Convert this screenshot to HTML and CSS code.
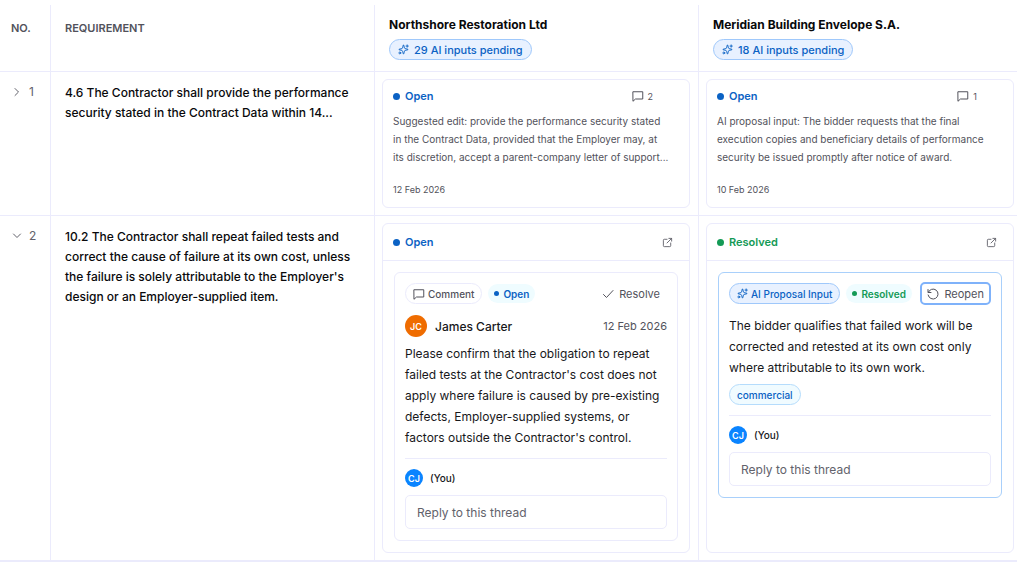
FILE: index.html
```
<!DOCTYPE html>
<html lang="en">
<head>
    <meta charset="UTF-8">
    <meta name="viewport" content="width=device-width, initial-scale=1.0">
    <title>Bid Comparison</title>
    <link rel="stylesheet" href="styles.css">
</head>
<body>
    <!-- shared icons -->
    <svg class="icon-defs" aria-hidden="true">
        <symbol id="icon-ai" viewBox="0 0 24 24">
            <path d="M9.937 15.5A2 2 0 0 0 8.5 14.063l-6.135-1.582a.5.5 0 0 1 0-.962L8.5 9.936A2 2 0 0 0 9.937 8.5l1.582-6.135a.5.5 0 0 1 .963 0L14.063 8.5A2 2 0 0 0 15.5 9.937l6.135 1.581a.5.5 0 0 1 0 .964L15.5 14.063a2 2 0 0 0-1.437 1.437l-1.582 6.135a.5.5 0 0 1-.963 0z"/>
            <path d="M20 2v5M22.500 4.500h-5"/>
            <circle cx="4" cy="19.500" r="2"/>
        </symbol>
        <symbol id="icon-comment" viewBox="0 0 24 24">
            <path d="M2.500 3.500h19v14.500H7l-4.500 4z"/>
        </symbol>
        <symbol id="icon-open" viewBox="0 0 24 24">
            <path d="M15 3h6v6M21 3L11 13M11 5H5a2 2 0 0 0-2 2v12a2 2 0 0 0 2 2h12a2 2 0 0 0 2-2v-6"/>
        </symbol>
        <symbol id="icon-check" viewBox="0 0 24 24">
            <path d="M3 13l6 6L22 5"/>
        </symbol>
        <symbol id="icon-reopen" viewBox="0 0 24 24">
            <path d="M2 3v6h6M2.500 9a10 10 0 1 1-.3 5"/>
        </symbol>
        <symbol id="icon-right" viewBox="0 0 24 24">
            <path d="M8 5l7 7-7 7"/>
        </symbol>
        <symbol id="icon-down" viewBox="0 0 24 24">
            <path d="M5 8l7 7 7-7"/>
        </symbol>
    </svg>

    <div class="table-wrap">
        <table class="compare">
            <thead>
                <tr>
                    <th class="col-no">No.</th>
                    <th class="col-req">Requirement</th>
                    <th class="col-bidder">
                        <div class="bidder">Northshore Restoration Ltd</div>
                        <span class="pill pill-ai pill-count"><svg class="icon"><use href="#icon-ai"/></svg>29 AI inputs pending</span>
                    </th>
                    <th class="col-bidder">
                        <div class="bidder">Meridian Building Envelope S.A.</div>
                        <span class="pill pill-ai pill-count"><svg class="icon"><use href="#icon-ai"/></svg>18 AI inputs pending</span>
                    </th>
                </tr>
            </thead>
            <tbody>
                <tr>
                    <td class="col-no">
                        <button type="button" class="toggle" aria-expanded="false"><svg class="icon"><use href="#icon-right"/></svg>1</button>
                    </td>
                    <td class="col-req">4.6 The Contractor shall provide the performance<br>security stated in the Contract Data within 14...</td>
                    <td class="col-bidder">
                        <div class="card summary">
                            <div class="summary-head">
                                <span class="status open">Open</span>
                                <span class="count"><svg class="icon"><use href="#icon-comment"/></svg>2</span>
                            </div>
                            <p>Suggested edit: provide the performance security stated<br>in the Contract Data, provided that the Employer may, at<br>its discretion, accept a parent-company letter of support...</p>
                            <time>12 Feb 2026</time>
                        </div>
                    </td>
                    <td class="col-bidder">
                        <div class="card summary">
                            <div class="summary-head">
                                <span class="status open">Open</span>
                                <span class="count"><svg class="icon"><use href="#icon-comment"/></svg>1</span>
                            </div>
                            <p>AI proposal input: The bidder requests that the final<br>execution copies and beneficiary details of performance<br>security be issued promptly after notice of award.</p>
                            <time>10 Feb 2026</time>
                        </div>
                    </td>
                </tr>
                <tr>
                    <td class="col-no">
                        <button type="button" class="toggle" aria-expanded="true"><svg class="icon"><use href="#icon-down"/></svg>2</button>
                    </td>
                    <td class="col-req">10.2 The Contractor shall repeat failed tests and<br>correct the cause of failure at its own cost, unless<br>the failure is solely attributable to the Employer's<br>design or an Employer-supplied item.</td>
                    <td class="col-bidder">
                        <div class="card detail">
                            <div class="detail-head">
                                <span class="status open">Open</span>
                                <a href="#" class="open-link" aria-label="Open thread"><svg class="icon"><use href="#icon-open"/></svg></a>
                            </div>
                            <div class="thread">
                                <div class="thread-head">
                                    <span class="pill"><svg class="icon"><use href="#icon-comment"/></svg>Comment</span>
                                    <span class="tag open">Open</span>
                                    <button type="button" class="action"><svg class="icon"><use href="#icon-check"/></svg>Resolve</button>
                                </div>
                                <div class="author">
                                    <span class="avatar avatar-jc">JC</span>
                                    <span class="name">James Carter</span>
                                    <time>12 Feb 2026</time>
                                </div>
                                <p class="message">Please confirm that the obligation to repeat<br>failed tests at the Contractor's cost does not<br>apply where failure is caused by pre-existing<br>defects, Employer-supplied systems, or<br>factors outside the Contractor's control.</p>
                                <div class="reply">
                                    <label for="reply1" class="you"><span class="avatar avatar-cj">CJ</span>(You)</label>
                                    <input type="text" id="reply1" placeholder="Reply to this thread">
                                </div>
                            </div>
                        </div>
                    </td>
                    <td class="col-bidder">
                        <div class="card detail">
                            <div class="detail-head">
                                <span class="status resolved">Resolved</span>
                                <a href="#" class="open-link" aria-label="Open thread"><svg class="icon"><use href="#icon-open"/></svg></a>
                            </div>
                            <div class="thread thread-ai">
                                <div class="thread-head">
                                    <span class="pill pill-ai"><svg class="icon"><use href="#icon-ai"/></svg>AI Proposal Input</span>
                                    <span class="tag resolved">Resolved</span>
                                    <button type="button" class="action action-focus"><svg class="icon"><use href="#icon-reopen"/></svg>Reopen</button>
                                </div>
                                <p class="message">The bidder qualifies that failed work will be<br>corrected and retested at its own cost only<br>where attributable to its own work.</p>
                                <span class="pill pill-topic">commercial</span>
                                <div class="reply">
                                    <label for="reply2" class="you"><span class="avatar avatar-cj">CJ</span>(You)</label>
                                    <input type="text" id="reply2" placeholder="Reply to this thread">
                                </div>
                            </div>
                        </div>
                    </td>
                </tr>
            </tbody>
        </table>
    </div>
</body>
</html>
```

FILE: styles.css
```
* {
    box-sizing: border-box;
}

body {
    margin: 0;
    padding-top: 5px;
    background-color: #fff;
    color: #18181b;
    font-family: Inter, "Liberation Sans", sans-serif;
    font-size: 12px;
}

p {
    margin: 0;
}

button, input {
    font-family: inherit;
}

.icon-defs {
    display: none;
}

.icon {
    width: 12px;
    height: 12px;
    flex: none;
    fill: none;
    stroke: currentColor;
    stroke-width: 2;
    stroke-linejoin: round;
    stroke-linecap: round;
}

/* table */
.table-wrap {
    overflow: hidden;
}

.compare {
    width: 100%;
    min-width: 1022px;
    table-layout: fixed;
    border-collapse: separate;
    border-spacing: 0;
}

th, td {
    padding: 0;
    text-align: left;
    vertical-align: top;
    border-bottom: 1px solid #ebebfc;
    white-space: nowrap;
}

th + th, td + td {
    border-left: 1px solid #ebebfc;
}

tbody tr:last-child td {
    border-bottom-width: 2px;
}

th {
    height: 67px;
}

th.col-no, th.col-req {
    padding-top: 15px;
    color: #52525b;
    font-size: 11px;
    line-height: 16px;
    font-weight: 600;
    text-transform: uppercase;
}

.col-no {
    width: 50px;
    padding-left: 11px;
}

.col-req {
    padding-left: 14px;
}

th.col-bidder {
    padding: 12px 14px 0;
}

td.col-req {
    padding-top: 11px;
    color: #09090b;
    font-weight: 500;
    line-height: 20px;
}

td.col-bidder {
    padding: 7px 8px 7px 7px;
}

.bidder {
    color: #09090b;
    font-weight: 700;
    line-height: 16px;
    margin-bottom: 6px;
}

.toggle {
    display: flex;
    align-items: center;
    gap: 6px;
    margin-top: 10px;
    padding: 0;
    border: 0;
    background: none;
    color: #62626b;
    font-size: 12px;
    line-height: 20px;
}

/* pills and tags */
.pill {
    display: inline-flex;
    align-items: center;
    gap: 3px;
    height: 21px;
    padding: 0 7px;
    border: 1px solid #ebebfc;
    border-radius: 11px;
    color: #52525b;
    font-size: 10px;
    font-weight: 500;
}

.pill-ai {
    border-color: #9fc8fb;
    background-color: #e8f1ff;
    color: #0b62c4;
}

.pill-ai .icon {
    width: 11px;
    height: 11px;
}

.pill-count {
    gap: 5px;
    padding: 0 8px;
    font-size: 11px;
}

.pill-topic {
    margin-top: 6px;
    border-color: #b5dcfc;
    background-color: #f0fbff;
    color: #0b62c4;
}

.open {
    color: #0b62c4;
}

.resolved {
    color: #149a56;
}

.status, .tag {
    display: flex;
    align-items: center;
    font-weight: 600;
}

.status {
    gap: 5px;
    font-size: 11px;
}

.status::before, .tag::before {
    content: "";
    width: 7px;
    height: 7px;
    border-radius: 50%;
    background-color: currentColor;
}

.tag {
    gap: 4px;
    height: 19px;
    padding: 0 6px;
    border-radius: 10px;
    background-color: #effcff;
    font-size: 10px;
}

.tag::before {
    width: 5px;
    height: 5px;
}

/* cards */
.card {
    border: 1px solid #ebebfc;
    border-radius: 6px;
}

.summary {
    height: 129px;
    padding: 8px 10px;
    color: #52525b;
}

.summary-head {
    display: flex;
    justify-content: space-between;
    height: 16px;
    padding-right: 26px;
    margin-bottom: 8px;
}

.count {
    display: flex;
    align-items: center;
    gap: 4px;
    font-size: 9px;
}

.summary p {
    font-size: 10px;
    line-height: 18px;
}

.summary time {
    display: block;
    margin-top: 17px;
    font-size: 9px;
    line-height: 14px;
}

.detail {
    height: 330px;
}

.detail-head {
    display: flex;
    justify-content: space-between;
    align-items: center;
    height: 37px;
    padding: 0 16px 0 10px;
    border-bottom: 1px solid #ebebfc;
}

.open-link {
    display: flex;
    color: #62626b;
}

.open-link .icon {
    width: 11px;
    height: 11px;
}

/* thread */
.thread {
    margin: 11px;
    padding: 10px 10px 11px;
    border: 1px solid #ebebfc;
    border-radius: 6px;
}

.thread-ai {
    border-color: #a9d0fb;
}

.thread-head {
    display: flex;
    align-items: center;
    gap: 6px;
    height: 21px;
    margin-bottom: 11px;
}

.action {
    display: flex;
    align-items: center;
    gap: 5px;
    height: 23px;
    margin-left: auto;
    padding: 0 7px;
    border: 0;
    border-radius: 5px;
    background: none;
    color: #52525b;
    font-size: 11px;
}

.action-focus {
    padding: 0 5px;
    border: 2px solid #7fb2fa;
}

.author {
    display: flex;
    align-items: center;
    height: 22px;
    margin-bottom: 6px;
}

.author .name {
    margin-left: 8px;
    font-weight: 500;
}

.author time {
    margin-left: auto;
    color: #52525b;
    font-size: 11px;
}

.avatar {
    display: flex;
    align-items: center;
    justify-content: center;
    border-radius: 50%;
    color: #fff;
    font-weight: 600;
}

.avatar-jc {
    width: 22px;
    height: 22px;
    background-color: #ef6c00;
    font-size: 9px;
}

.avatar-cj {
    width: 18px;
    height: 18px;
    background-color: #0a84ff;
    font-size: 9px;
}

.message {
    line-height: 21px;
}

.reply {
    margin-top: 10px;
    padding-top: 10px;
    border-top: 1px solid #ebebfc;
}

.you {
    display: flex;
    align-items: center;
    gap: 7px;
    margin-bottom: 8px;
    font-size: 10px;
    font-weight: 500;
}

.reply input {
    display: block;
    width: 100%;
    height: 34px;
    padding: 0 11px;
    border: 1px solid #ebebfc;
    border-radius: 5px;
    font-size: 12px;
}

.reply input::placeholder {
    color: #62626b;
    opacity: 1;
}
```
